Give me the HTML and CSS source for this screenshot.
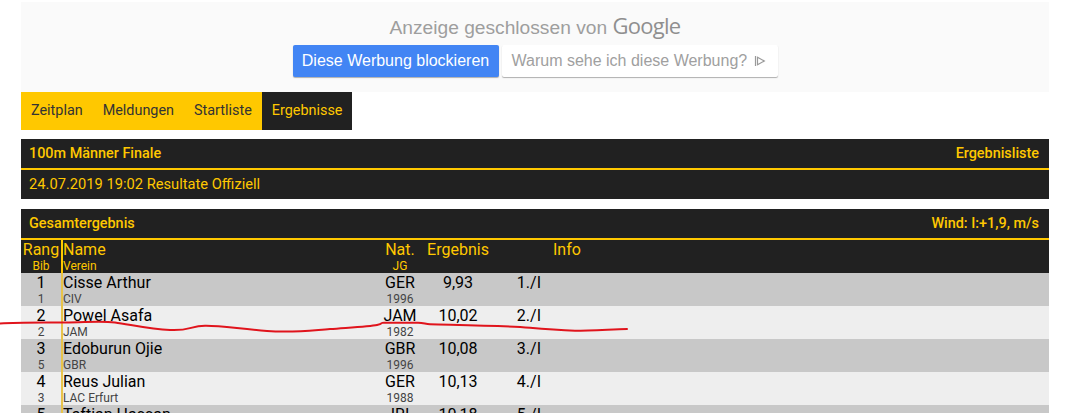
FILE: index.html
```html
<!DOCTYPE html>
<html lang="de">
<head>
  <meta charset="UTF-8" />
  <title>100m Männer Finale</title>
  <link rel="stylesheet" href="styles.css">
</head>
<body>

  <div class="ad">
    <p class="ad-title">Anzeige geschlossen von <span class="ad-google">Google</span></p>
    <div class="ad-buttons">
      <span class="ad-block">Diese Werbung blockieren</span>
      <span class="ad-why">Warum sehe ich diese Werbung?
        <svg class="ad-icon" width="12" height="12" viewBox="0 0 12 12" fill="none" stroke="#9a9a9a" stroke-width="1.2">
          <path d="M1.5 1v10"/>
          <path d="M3.5 2.2l6.8 3.8-6.8 3.8z"/>
        </svg>
      </span>
    </div>
  </div>

  <nav class="menu">
    <a href="#">Zeitplan</a>
    <a href="#">Meldungen</a>
    <a href="#">Startliste</a>
    <a href="#" class="active">Ergebnisse</a>
  </nav>

  <div class="panel">
    <div class="panel-head">
      <span>100m Männer Finale</span>
      <span>Ergebnisliste</span>
    </div>
    <div class="panel-info">24.07.2019 19:02 Resultate Offiziell</div>
  </div>

  <div class="panel results">
    <div class="panel-head">
      <span>Gesamtergebnis</span>
      <span>Wind: I:+1,9, m/s</span>
    </div>

    <div class="row row-header">
      <div class="col-rang"><b>Rang</b><small>Bib</small></div>
      <div class="col-name"><b>Name</b><small>Verein</small></div>
      <div class="col-nat"><b>Nat.</b><small>JG</small></div>
      <div class="col-result"><b>Ergebnis</b></div>
      <div class="col-place"></div>
      <div class="col-info"><b>Info</b></div>
    </div>

    <div class="row">
      <div class="col-rang"><b>1</b><small>1</small></div>
      <div class="col-name"><b>Cisse Arthur</b><small>CIV</small></div>
      <div class="col-nat"><b>GER</b><small>1996</small></div>
      <div class="col-result"><b>9,93</b></div>
      <div class="col-place"><b>1./I</b></div>
      <div class="col-info"></div>
    </div>

    <div class="row">
      <div class="col-rang"><b>2</b><small>2</small></div>
      <div class="col-name"><b>Powel Asafa</b><small>JAM</small></div>
      <div class="col-nat"><b>JAM</b><small>1982</small></div>
      <div class="col-result"><b>10,02</b></div>
      <div class="col-place"><b>2./I</b></div>
      <div class="col-info"></div>
    </div>

    <div class="row">
      <div class="col-rang"><b>3</b><small>5</small></div>
      <div class="col-name"><b>Edoburun Ojie</b><small>GBR</small></div>
      <div class="col-nat"><b>GBR</b><small>1996</small></div>
      <div class="col-result"><b>10,08</b></div>
      <div class="col-place"><b>3./I</b></div>
      <div class="col-info"></div>
    </div>

    <div class="row">
      <div class="col-rang"><b>4</b><small>3</small></div>
      <div class="col-name"><b>Reus Julian</b><small>LAC Erfurt</small></div>
      <div class="col-nat"><b>GER</b><small>1988</small></div>
      <div class="col-result"><b>10,13</b></div>
      <div class="col-place"><b>4./I</b></div>
      <div class="col-info"></div>
    </div>

    <div class="row">
      <div class="col-rang"><b>5</b><small>4</small></div>
      <div class="col-name"><b>Taftian Hassan</b><small>IRI</small></div>
      <div class="col-nat"><b>IRI</b><small>1993</small></div>
      <div class="col-result"><b>10,18</b></div>
      <div class="col-place"><b>5./I</b></div>
      <div class="col-info"></div>
    </div>
  </div>

  <!-- red pen stroke over the table -->
  <svg class="pen" width="640" height="30" viewBox="0 310 640 30" fill="none" stroke="#e0141c" stroke-width="2" stroke-linecap="round" stroke-linejoin="round">
    <path d="M0 323.5C20 322 45 322.5 65 322.5S100 320.5 115 322.5 150 329 170 330 190 326 205 325.7 240 329 267 331 310 330.5 330 329 370 326.5 377 325 380 322.7 384 322.7H418C424 322.7 425 324 430 324.2 460 325 500 325.5 530 327.7S560 330.7 575 330.7 610 329.5 627 329"/>
  </svg>

</body>
</html>
```

FILE: styles.css
```css
:root {
  --dark: #212121;
  --accent: #ffc800;
  --row-odd: #c8c8c8;
  --row-even: #eeeeee;
}

html, body {
  height: 100%;
  overflow: hidden;
}

body {
  margin: 0;
  padding: 0 22px 0 21px;
  position: relative;
  background: #fff;
  font-family: Roboto, sans-serif;
}

/* closed ad block */
.ad {
  height: 90px;
  margin-top: 2px;
  background: #fafafa;
  display: flex;
  flex-direction: column;
  align-items: center;
  font-family: "Liberation Sans", Arial, sans-serif;
}

.ad-title {
  margin: 0;
  height: 43px;
  padding-top: 10px;
  box-sizing: border-box;
  font-size: 19.2px;
  line-height: 26px;
  color: #9e9e9e;
}

.ad-google {
  font-family: "Open Sans", sans-serif;
  font-weight: 500;
  font-size: 22px;
  letter-spacing: -0.7px;
  color: #8f8f8f;
}

.ad-buttons {
  display: flex;
  gap: 3px;
}

.ad-block, .ad-why {
  height: 32px;
  line-height: 32px;
  border-radius: 2px;
  font-size: 16px;
  box-shadow: 0 1px 1px rgba(0, 0, 0, 0.3);
}

.ad-block {
  width: 206px;
  text-align: center;
  background: #4285f4;
  color: #fff;
}

.ad-why {
  width: 276px;
  box-sizing: border-box;
  padding-left: 10px;
  background: #fff;
  color: #a0a0a0;
  white-space: nowrap;
}

.ad-icon {
  vertical-align: -1px;
  margin-left: 2px;
}

/* menu */
.menu {
  display: flex;
  width: fit-content;
  height: 38px;
  background: var(--accent);
}

.menu a {
  padding: 0 10px;
  line-height: 38px;
  font-size: 14.4px;
  color: #333;
  text-decoration: none;
}

.menu a.active {
  background: var(--dark);
  color: var(--accent);
}

/* panels */
.panel {
  margin-top: 9px;
  background: var(--dark);
  color: var(--accent);
}

.results {
  margin-top: 10px;
}

.panel-head {
  display: flex;
  justify-content: space-between;
  height: 29px;
  padding: 0 10px 0 8px;
  border-bottom: 2px solid var(--accent);
  font-size: 14.4px;
  font-weight: 500;
  line-height: 29px;
}

.panel-info {
  height: 29px;
  padding: 0 8px;
  font-size: 14.7px;
  line-height: 29px;
}

/* result rows */
.row {
  display: flex;
  height: 33px;
  background: var(--row-odd);
  color: #000;
}

.row:nth-child(even) {
  background: var(--row-even);
}

.row b {
  display: block;
  height: 20px;
  font-size: 16px;
  font-weight: 400;
  line-height: 20px;
}

.row small {
  display: block;
  height: 13px;
  font-size: 12px;
  line-height: 12px;
  color: #444;
}

.row-header, .row-header:nth-child(even) {
  background: var(--dark);
  color: var(--accent);
}

.row-header small {
  color: var(--accent);
}

.col-rang {
  width: 40px;
  flex: none;
  text-align: center;
  border-right: 2px solid #e8c44a;
}

.row-header .col-rang {
  border-right-color: var(--accent);
}

.col-name {
  width: 317px;
  flex: none;
}

.col-nat {
  width: 40px;
  flex: none;
  text-align: center;
}

.col-result {
  width: 76px;
  flex: none;
  text-align: center;
}

.col-place {
  width: 45px;
  flex: none;
  text-align: right;
}

.col-info {
  padding-left: 12px;
}

.pen {
  position: absolute;
  left: 0;
  top: 310px;
}
```
